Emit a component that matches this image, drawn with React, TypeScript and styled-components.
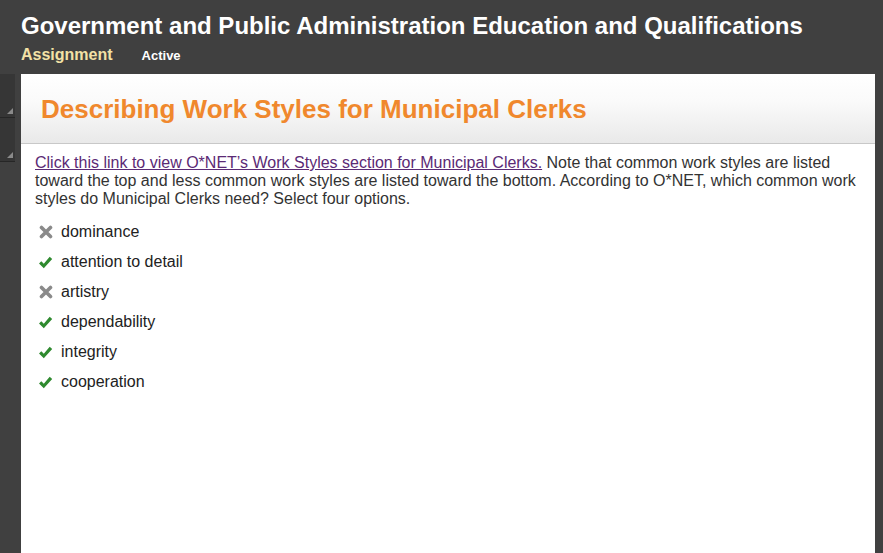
import React from "react";
import styled, { createGlobalStyle } from "styled-components";

const Global = createGlobalStyle`
  html, body { margin: 0; padding: 0; height: 100%; background: #404040; }
  #root { height: 100%; }
  * { box-sizing: border-box; }
`;

const Page = styled.div`
  width: 883px;
  height: 553px;
  background: #404040;
  font-family: "Liberation Sans", Arial, sans-serif;
  display: flex;
  flex-direction: column;
  overflow: hidden;
`;

const Header = styled.header`
  padding: 11px 0 0 21px;
  height: 74px;
`;

const HeaderTitle = styled.h1`
  margin: 0;
  color: #ffffff;
  font-size: 24px;
  font-weight: bold;
  line-height: 30px;
`;

const HeaderMeta = styled.div`
  display: flex;
  align-items: baseline;
  gap: 29px;
  margin-top: 5px;
`;

const MetaLabel = styled.span<{ $accent?: boolean }>`
  color: ${(p) => (p.$accent ? "#f3e2a6" : "#ffffff")};
  font-weight: bold;
  font-size: ${(p) => (p.$accent ? "16px" : "13px")};
`;

const Main = styled.div`
  flex: 1;
  display: flex;
`;

const Rail = styled.div`
  width: 21px;
  display: flex;
  flex-direction: column;
`;

const RailTab = styled.div`
  position: relative;
  width: 15px;
  height: 44px;
  background: #363636;
  border-bottom: 1px solid #262626;
  &::after {
    content: "";
    position: absolute;
    right: 2px;
    bottom: 3px;
    border-left: 6px solid transparent;
    border-bottom: 6px solid #8a8a8a;
  }
`;

const Panel = styled.section`
  width: 854px;
  background: #ffffff;
  display: flex;
  flex-direction: column;
`;

const TitleBar = styled.div`
  height: 70px;
  background: linear-gradient(#ffffff 0%, #fafafa 40%, #e9e9e9 100%);
  border-bottom: 1px solid #c8c8c8;
  padding: 20px 0 0 20px;
`;

const Title = styled.h2`
  margin: 0;
  color: #f0882d;
  font-size: 26px;
  font-weight: bold;
  line-height: 30px;
`;

const Content = styled.div`
  padding: 10px 14px 0 14px;
  color: #333333;
  font-size: 16px;
  line-height: 18px;
`;

const Prompt = styled.p`
  margin: 0;
`;

const Link = styled.a`
  color: #5b2a75;
  text-decoration: underline;
`;

const Options = styled.ul`
  list-style: none;
  margin: 15px 0 0 0;
  padding: 0;
  display: flex;
  flex-direction: column;
  gap: 12px;
`;

const Option = styled.li`
  display: flex;
  align-items: center;
  gap: 8px;
  height: 18px;
  padding-left: 3px;
  color: #222222;
`;

const IconBox = styled.span`
  width: 15px;
  height: 15px;
  display: inline-flex;
  align-items: center;
  justify-content: center;
`;

const Check = () => (
  <IconBox>
    <svg width="15" height="13" viewBox="0 0 15 13">
      <path d="M1 7.5 L3.3 5.2 L5.8 7.7 L11.7 0.8 L14.2 3.1 L5.8 12.2 Z" fill="#2f8a2f" />
    </svg>
  </IconBox>
);

const Cross = () => (
  <IconBox>
    <svg width="14" height="14" viewBox="0 0 14 14">
      <path
        d="M2.5 2.5 L11.5 11.5 M11.5 2.5 L2.5 11.5"
        stroke="#8a8a8a"
        strokeWidth="3.6"
        strokeLinecap="round"
      />
    </svg>
  </IconBox>
);

const options: { label: string; ok: boolean }[] = [
  { label: "dominance", ok: false },
  { label: "attention to detail", ok: true },
  { label: "artistry", ok: false },
  { label: "dependability", ok: true },
  { label: "integrity", ok: true },
  { label: "cooperation", ok: true },
];

export default function App() {
  return (
    <Page>
      <Global />
      <Header>
        <HeaderTitle>Government and Public Administration Education and Qualifications</HeaderTitle>
        <HeaderMeta>
          <MetaLabel $accent>Assignment</MetaLabel>
          <MetaLabel>Active</MetaLabel>
        </HeaderMeta>
      </Header>
      <Main>
        <Rail>
          <RailTab />
          <RailTab />
        </Rail>
        <Panel>
          <TitleBar>
            <Title>Describing Work Styles for Municipal Clerks</Title>
          </TitleBar>
          <Content>
            <Prompt>
              <Link href="#">Click this link to view O*NET’s Work Styles section for Municipal Clerks.</Link>{" "}
              Note that common work styles are listed toward the top and less common work styles are listed
              toward the bottom. According to O*NET, which common work styles do Municipal Clerks need? Select
              four options.
            </Prompt>
            <Options>
              {options.map((o) => (
                <Option key={o.label}>
                  {o.ok ? <Check /> : <Cross />}
                  <span>{o.label}</span>
                </Option>
              ))}
            </Options>
          </Content>
        </Panel>
      </Main>
    </Page>
  );
}
